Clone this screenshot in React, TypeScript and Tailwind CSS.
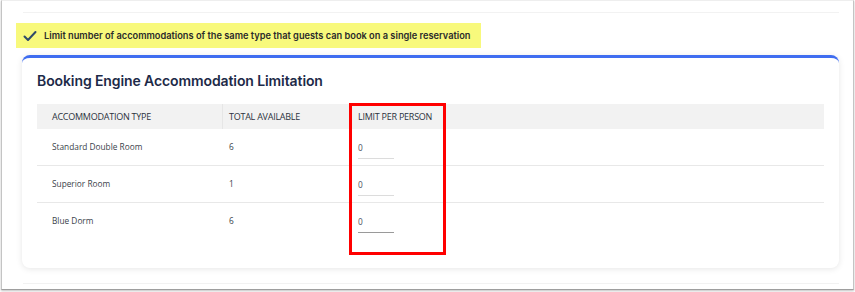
import React from "react";

const rows = [
  { name: "Standard Double Room", total: 6, limit: 0, line: "bg-[#dcdcdc]" },
  { name: "Superior Room", total: 1, limit: 0, line: "bg-[#dcdcdc]" },
  { name: "Blue Dorm", total: 6, limit: 0, line: "bg-[#9a9a9a]" },
];

export default function App() {
  return (
    <div className="w-[855px] h-[292px] bg-white">
      <div className="ml-[1px] w-[853px] h-[290px] border-x border-b border-t border-t-[#eeeeee] border-x-[#c4c4c4] border-b-[#9e9e9e] shadow-[0_1px_2px_rgba(0,0,0,0.25)] flex flex-col">
        {/* top divider */}
        <div className="mt-[11px] ml-[21px] w-[816px] h-px bg-[#f2f2f2]" />

        {/* highlighted note */}
        <div className="mt-[10px] ml-[14px] w-[465px] h-[25px] bg-[#f8f97c] flex items-center">
          <svg width="14" height="14" viewBox="0 0 14 14" className="ml-[7px]">
            <polyline
              points="1.5,7.5 5,11 12.5,3"
              fill="none"
              stroke="#2f4a6a"
              strokeWidth="2"
              strokeLinecap="round"
              strokeLinejoin="round"
            />
          </svg>
          <span className="ml-[7px] text-[9.25px] font-semibold text-[#2b2b2b] font-['Inter',sans-serif]">
            Limit number of accommodations of the same type that guests can book on a single reservation
          </span>
        </div>

        {/* card */}
        <div className="relative mt-[7px] ml-[20px] w-[817px] h-[213px] rounded-lg border-t-[3px] border-[#3f6df0] bg-white shadow-[0_1px_6px_rgba(0,0,0,0.1)] px-[15px]">
          <h2 className="mt-[12px] text-[14px] font-semibold text-[#1d2a48] font-['Inter',sans-serif] tracking-[-0.1px]">
            Booking Engine Accommodation Limitation
          </h2>

          <div className="mt-[13px] font-['Open_Sans',sans-serif] text-[8.3px] text-[#3a3f4a]">
            <div className="flex h-[25px] items-center bg-[#f2f2f2] uppercase text-[9px] tracking-[-0.25px] text-[#2c3340]">
              <div className="w-[186px] h-full pl-[15px] flex items-center border-r border-[#e6e6e6]">Accommodation Type</div>
              <div className="w-[128px] pl-[6px]">Total Available</div>
              <div className="pl-[7px]">Limit per Person</div>
            </div>
            {rows.map((r, i) => (
              <div
                key={r.name}
                className={`flex h-[37px] items-center ${i < rows.length - 1 ? "border-b border-[#e8e8e8]" : ""}`}
              >
                <div className="w-[186px] pl-[15px]">{r.name}</div>
                <div className="w-[128px] pl-[6px]">{r.total}</div>
                <div className="pl-[7px] pt-[7px]">
                  <div className="h-[10px] leading-[10px] text-[#4a5060]">{r.limit}</div>
                  <div className={`mt-[5px] w-[36px] h-px ${r.line}`} />
                </div>
              </div>
            ))}
          </div>

          {/* annotation box */}
          <div className="absolute left-[327px] top-[45px] w-[97px] h-[152px] border-[3px] border-[#ff0000]" />
        </div>

        {/* bottom divider */}
        <div className="mt-[15px] ml-[21px] w-[816px] h-px bg-[#f2f2f2]" />
      </div>
    </div>
  );
}
